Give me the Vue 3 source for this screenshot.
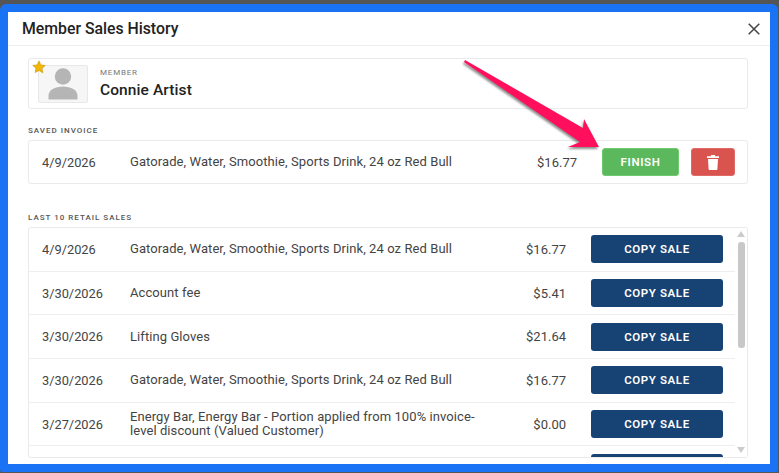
<script setup>
const sales = [
  { date: '4/9/2026', items: 'Gatorade, Water, Smoothie, Sports Drink, 24 oz Red Bull', total: '$16.77' },
  { date: '3/30/2026', items: 'Account fee', total: '$5.41' },
  { date: '3/30/2026', items: 'Lifting Gloves', total: '$21.64' },
  { date: '3/30/2026', items: 'Gatorade, Water, Smoothie, Sports Drink, 24 oz Red Bull', total: '$16.77' },
  { date: '3/27/2026', items: 'Energy Bar, Energy Bar - Portion applied from 100% invoice-level discount (Valued Customer)', total: '$0.00' }
]
</script>

<template>
  <div class="frame">
    <div class="modal">
      <header class="modal__head">
        <h1>Member Sales History</h1>
        <svg class="close" width="12" height="12" viewBox="0 0 12 12">
          <path d="M0.7 0.7 11.3 11.3M11.3 0.7 0.7 11.3" stroke="#444" stroke-width="1.5" fill="none" />
        </svg>
      </header>

      <div class="modal__body">
        <section class="member">
          <div class="avatar">
            <svg class="star" width="14" height="14" viewBox="0 0 24 24">
              <path d="M12 1.5l3.2 6.9 7.5.9-5.5 5.2 1.4 7.5L12 18l-6.6 3.5 1.4-7.500L1.300 9.300l7.500-.9z" fill="#f2b705" stroke="#c98f00" stroke-width="1" />
            </svg>
            <svg width="30" height="32" viewBox="0 0 30 32">
              <circle cx="15" cy="8.500" r="8.200" fill="#b5b5b5" />
              <path d="M0.500 31.500V28C0.500 22 7 18.500 15 18.500S29.500 22 29.500 28V31.500z" fill="#b5b5b5" />
            </svg>
          </div>
          <div>
            <div class="member__label">MEMBER</div>
            <div class="member__name">Connie Artist</div>
          </div>
        </section>

        <h2 class="section-label saved-label">SAVED INVOICE</h2>
        <section class="saved">
          <span class="date">4/9/2026</span>
          <span class="items">Gatorade, Water, Smoothie, Sports Drink, 24 oz Red Bull</span>
          <span class="total">$16.77</span>
          <button class="btn btn--finish">FINISH</button>
          <button class="btn btn--delete" aria-label="Delete">
            <svg width="12" height="15" viewBox="0 0 12 15">
              <path d="M4.200 0h3.600l.6 1.200H12v1.700H0V1.200h3.600zM1 4h10l-.6 10a1 1 0 0 1-1 1H2.600a1 1 0 0 1-1-1z" fill="#fff" />
            </svg>
          </button>
        </section>

        <h2 class="section-label list-label">LAST 10 RETAIL SALES</h2>
        <section class="list">
          <div class="list__rows">
            <div v-for="(sale, i) in sales" :key="i" class="row">
              <span class="date">{{ sale.date }}</span>
              <span class="items">{{ sale.items }}</span>
              <span class="total">{{ sale.total }}</span>
              <button class="btn btn--copy">COPY SALE</button>
            </div>
            <div class="row row--cut">
              <button class="btn btn--copy"></button>
            </div>
          </div>
          <div class="scroll">
            <span class="scroll__up"></span>
            <span class="scroll__thumb"></span>
            <span class="scroll__down"></span>
          </div>
        </section>
      </div>

      <svg class="arrow" width="150" height="100" viewBox="0 0 150 100">
        <path d="M1 0 L119 68 L120 59 L135 87 L104 87 L116 82 L0 2 Z" fill="#ff0f5c" />
      </svg>
    </div>
  </div>
</template>

<style scoped>
.frame {
  box-sizing: border-box;
  width: 778px;
  height: 468px;
  margin-top: 4px;
  padding: 8px;
  background: #1a73f5;
  border-radius: 6px 6px 2px 2px;
  font-family: Roboto, "Liberation Sans", sans-serif;
  color: #444;
}

.modal {
  position: relative;
  height: 452px;
  background: #fff;
  overflow: hidden;
}

.modal__head {
  display: flex;
  align-items: center;
  justify-content: space-between;
  height: 33px;
  padding: 0 10px 0 14px;
  border-bottom: 1px solid #eee;
}

.modal__head h1 {
  margin: 0;
  font-size: 15.800px;
  font-weight: 500;
  color: #222;
}

.modal__body {
  padding: 12px 22px 0 20px;
}

.member {
  display: flex;
  align-items: center;
  gap: 12px;
  height: 49px;
  padding-left: 9px;
  border: 1px solid #eaeaea;
  border-radius: 3px;
}

.avatar {
  position: relative;
  display: flex;
  align-items: flex-end;
  justify-content: center;
  box-sizing: border-box;
  width: 50px;
  height: 38px;
  padding-bottom: 2px;
  background: #f6f6f6;
  border: 1px solid #e8e8e8;
  border-radius: 2px;
}

.star {
  position: absolute;
  top: -6px;
  left: -7px;
}

.member__label {
  font-size: 8px;
  line-height: 10px;
  letter-spacing: 0.8px;
  color: #777;
}

.member__name {
  margin-top: 3px;
  font-size: 15.500px;
  font-weight: 500;
  line-height: 18px;
  letter-spacing: 0.100px;
  color: #222;
}

.section-label {
  margin: 0;
  font-size: 8px;
  font-weight: 500;
  line-height: 10px;
  letter-spacing: 1px;
  color: #555;
}

.saved-label {
  margin-top: 17px;
}

.list-label {
  margin-top: 29px;
}

.saved {
  display: flex;
  align-items: center;
  box-sizing: border-box;
  height: 44px;
  margin-top: 4px;
  padding: 0 12px 0 13px;
  border: 1px solid #eaeaea;
  border-radius: 3px;
}

.date {
  flex: none;
  width: 88px;
  font-size: 12.800px;
}

.items {
  flex: 1;
  font-size: 13px;
  line-height: 14px;
  letter-spacing: 0.08px;
}

.total {
  flex: none;
  font-size: 13px;
}

.btn {
  flex: none;
  height: 28px;
  padding: 0;
  border: none;
  border-radius: 3px;
  font-family: inherit;
  font-size: 11.500px;
  font-weight: 600;
  letter-spacing: 0.600px;
  color: #fff;
}

.btn--finish {
  width: 77px;
  margin-left: 25px;
  background: #5cb85c;
  border: 1px solid #6fc96f;
}

.btn--delete {
  display: flex;
  align-items: center;
  justify-content: center;
  width: 44px;
  margin-left: 12px;
  background: #d9534f;
  border: 1px solid #e06a66;
}

.list {
  display: flex;
  box-sizing: border-box;
  height: 231px;
  margin-top: 4px;
  border: 1px solid #eaeaea;
  border-radius: 3px;
  overflow: hidden;
}

.list__rows {
  flex: 1;
  min-width: 0;
  overflow: hidden;
}

.row {
  display: flex;
  align-items: center;
  box-sizing: border-box;
  height: 43.700px;
  padding: 0 0 0 13px;
  border-bottom: 1px solid #eee;
}

.row .items {
  padding-right: 30px;
}

.row .total {
  width: 52px;
  text-align: right;
}

.row--cut {
  justify-content: flex-end;
}

.btn--copy {
  width: 132px;
  margin-left: 25px;
  margin-right: 12px;
  background: #174274;
}

.scroll {
  position: relative;
  flex: none;
  width: 12px;
  background: #fff;
}

.scroll__up,
.scroll__down {
  position: absolute;
  left: 2px;
  width: 0;
  height: 0;
  border-left: 4px solid transparent;
  border-right: 4px solid transparent;
}

.scroll__up {
  top: 3px;
  border-bottom: 6px solid #ccc;
}

.scroll__down {
  bottom: 4px;
  border-top: 6px solid #ccc;
}

.scroll__thumb {
  position: absolute;
  top: 14px;
  left: 3px;
  width: 7px;
  height: 106px;
  background: #c8c8c8;
  border-radius: 3px;
}

.arrow {
  position: absolute;
  top: 48px;
  left: 456px;
  filter: drop-shadow(-1px 2px 1px rgba(0, 0, 0, 0.45));
}
</style>

<style>
body {
  background: #555;
}
</style>
